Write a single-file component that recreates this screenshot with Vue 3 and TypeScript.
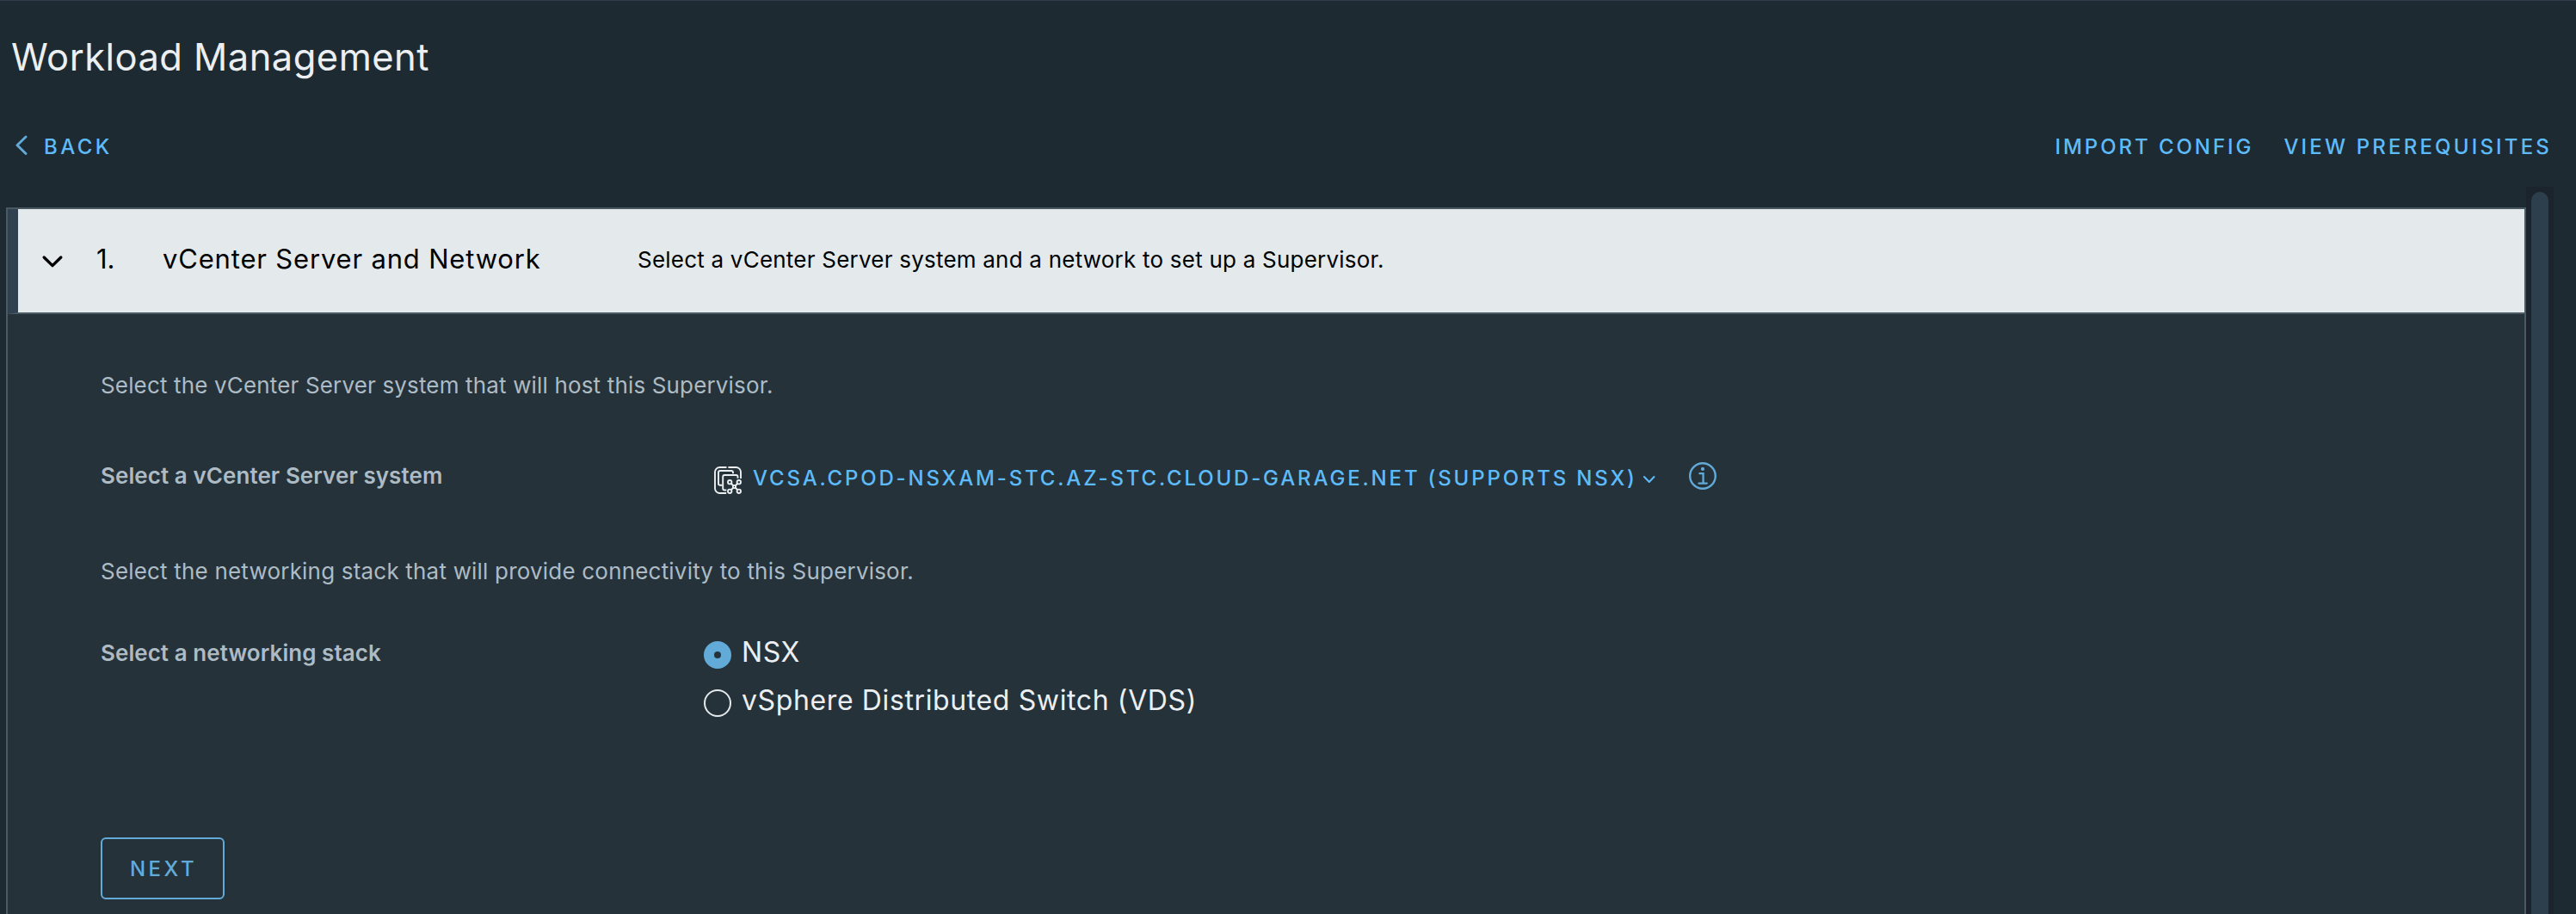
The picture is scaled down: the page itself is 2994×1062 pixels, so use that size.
<script setup lang="ts">
import { ref } from 'vue'

interface NetworkStack {
  id: string
  label: string
}

const stacks: NetworkStack[] = [
  { id: 'nsx', label: 'NSX' },
  { id: 'vds', label: 'vSphere Distributed Switch (VDS)' },
]
const selectedStack = ref('nsx')
const vcenter = 'vcsa.cpod-nsxam-stc.az-stc.cloud-garage.net (supports NSX)'
</script>

<template>
  <div class="page">
    <h1 class="title">Workload Management</h1>

    <nav class="toolbar">
      <a class="link back">
        <svg class="back-icon" width="16" height="24" viewBox="0 0 16 24">
          <path d="M13 2 3 11.800 13 21.500" fill="none" stroke="#62abd8" stroke-width="2.900" stroke-linecap="round" stroke-linejoin="round" />
        </svg>
        <span class="back-text">Back</span>
      </a>
      <div class="actions">
        <a class="link import">Import Config</a>
        <a class="link prereq">View Prerequisites</a>
      </div>
    </nav>

    <div class="scroller">
      <section class="panel">
        <header class="step-header">
          <svg class="step-caret" width="26" height="18" viewBox="0 0 26 18">
            <path d="M3.200 3 13 12.600 22.800 3" fill="none" stroke="#000" stroke-width="3.400" stroke-linecap="round" stroke-linejoin="round" />
          </svg>
          <span class="step-number">1.</span>
          <span class="step-title">vCenter Server and Network</span>
          <span class="step-desc">Select a vCenter Server system and a network to set up a Supervisor.</span>
        </header>

        <div class="step-body">
          <p class="intro host">Select the vCenter Server system that will host this Supervisor.</p>

          <div class="row system-row">
            <label class="label system-label">Select a vCenter Server system</label>
            <div class="system">
              <svg class="vc-icon" width="32" height="32" viewBox="0 0 32 32" fill="none" stroke="#eceff1" stroke-width="1.900">
                <path d="M14.200 31H6.500a5.500 5.500 0 0 1-5.500-5.500V6.500A5.500 5.500 0 0 1 6.500 1h8" />
                <path d="M16.400 1h9.100A5.500 5.500 0 0 1 31 6.500V14" />
                <path d="M22 8.300V7a2 2 0 0 0-2-2H7a2 2 0 0 0-2 2v12.700a2 2 0 0 0 2 2h2.500" />
                <path d="M27.500 13.800V12a2 2 0 0 0-2-2H12.200a2 2 0 0 0-2 2v13.500a2 2 0 0 0 2 2h2.100" />
                <path d="m19.500 19.500 8 8m0-8-8 8" />
                <g fill="#25333b">
                  <circle cx="18.200" cy="18.200" r="2.200" />
                  <circle cx="28.800" cy="18.200" r="2.200" />
                  <circle cx="18.200" cy="28.800" r="2.200" />
                  <circle cx="28.800" cy="28.800" r="2.200" />
                  <circle cx="23.500" cy="23.500" r="1.600" />
                </g>
              </svg>
              <a class="link vcenter">{{ vcenter }}</a>
              <svg class="drop-caret" width="16" height="12" viewBox="0 0 16 12">
                <path d="M2 3 7.800 8.900 13.500 3" fill="none" stroke="#5ebbfa" stroke-width="2.100" stroke-linecap="round" stroke-linejoin="round" />
              </svg>
              <svg class="info" width="32" height="32" viewBox="0 0 32 32" fill="none" stroke="#62abd8">
                <circle cx="16" cy="16" r="14.800" stroke-width="2.400" />
                <circle cx="16" cy="7.900" r="2.100" fill="#62abd8" stroke="none" />
                <path d="M12.400 13.200h4.200v11.200M11.500 24.600h9.300" stroke-width="2.300" stroke-linecap="round" />
              </svg>
            </div>
          </div>

          <p class="intro stack">Select the networking stack that will provide connectivity to this Supervisor.</p>

          <div class="row stack-row">
            <label class="label stack-label">Select a networking stack</label>
            <div class="radios">
              <div
                v-for="s in stacks"
                :key="s.id"
                class="radio"
                :class="[s.id, { checked: s.id === selectedStack }]"
                @click="selectedStack = s.id"
              >
                <span class="dot"></span>
                <span class="radio-text">{{ s.label }}</span>
              </div>
            </div>
          </div>

          <button class="next">Next</button>
        </div>
      </section>
      <div class="track"><div class="thumb"></div></div>
    </div>
  </div>
</template>

<style>
body {
  background: #1e2a32;
  overflow: hidden;
}
</style>

<style scoped>
.page {
  box-sizing: border-box;
  height: 1062px;
  display: flex;
  flex-direction: column;
  overflow: hidden;
  border-top: 1px solid #2f3e4a;
  background: #1e2a32;
  color: #eceff1;
  font-family: Inter, "Liberation Sans", sans-serif;
}
.title {
  margin: 33px 0 0 13px;
  font-size: 43.500px;
  line-height: 64px;
  font-weight: 400;
  letter-spacing: 0.450px;
}
.toolbar {
  display: flex;
  justify-content: space-between;
  margin: 56px 28px 0 17px;
  height: 32px;
}
.link {
  color: #5ebbfa;
  font-size: 24px;
  line-height: 32px;
  font-weight: 500;
  text-transform: uppercase;
  white-space: nowrap;
}
.back {
  display: flex;
  letter-spacing: 3.400px;
}
.back-icon {
  margin: 3px 18px 0 0;
}
.back-text,
.actions {
  padding-top: 1px;
}
.actions {
  display: flex;
  gap: 35px;
}
.import {
  letter-spacing: 2.940px;
}
.prereq {
  letter-spacing: 3.180px;
}
.scroller {
  display: flex;
  flex: 1;
  margin: 31px 26px 0 7px;
}
.panel {
  flex: 1;
  display: flex;
  flex-direction: column;
  margin-top: 24px;
  border: 2px solid #4b5964;
  border-bottom: 0;
}
.step-header {
  box-sizing: border-box;
  height: 122px;
  display: flex;
  align-items: center;
  padding-left: 27px;
  border-left: 12px solid #304250;
  border-bottom: 2px solid #4b5964;
  background: #e4e9eb;
  color: #000;
  white-space: nowrap;
}
.step-caret {
  margin-top: 3px;
}
.step-number {
  width: 77px;
  margin-left: 38px;
  font-size: 31px;
  line-height: 40px;
  padding-bottom: 4px;
}
.step-title {
  width: 552px;
  font-size: 31px;
  line-height: 40px;
  padding-bottom: 4px;
  letter-spacing: 0.820px;
}
.step-desc {
  font-size: 26px;
  line-height: 36px;
  padding-bottom: 3px;
  letter-spacing: 0.220px;
}
.step-body {
  flex: 1;
  padding: 65px 0 0 108px;
  background: #25323a;
}
.intro {
  margin: 0;
  font-size: 26px;
  line-height: 36px;
  color: #adbbc4;
}
.host {
  letter-spacing: 0.157px;
}
.stack {
  margin-top: 72px;
  letter-spacing: 0.195px;
}
.row {
  display: flex;
}
.label {
  font-size: 26px;
  line-height: 36px;
  font-weight: 600;
  color: #adbbc4;
}
.system-row {
  height: 40px;
  margin-top: 68px;
}
.system-label {
  width: 713px;
  padding-top: 1px;
  letter-spacing: 0.070px;
}
.system {
  display: flex;
}
.vc-icon {
  margin-top: 8px;
}
.vcenter {
  margin: 6px 0 0 13px;
  letter-spacing: 2.830px;
}
.drop-caret {
  margin: 17px 0 0 6px;
}
.info {
  margin: 3px 0 0 38px;
}
.stack-row {
  height: 112px;
  margin-top: 57px;
}
.stack-label {
  width: 701px;
  padding-top: 2px;
  letter-spacing: 0.053px;
}
.radios {
  display: flex;
  flex-direction: column;
}
.radio {
  display: flex;
  height: 58px;
}
.dot {
  box-sizing: border-box;
  width: 32px;
  height: 32px;
  margin: 6px 12px 0 0;
  border: 2px solid #e4e9eb;
  border-radius: 50%;
}
.checked .dot {
  border: 12px solid #62abd8;
}
.radio-text {
  margin-top: -1px;
  font-size: 32px;
  line-height: 40px;
  letter-spacing: 0.620px;
}
.next {
  display: block;
  box-sizing: border-box;
  width: 144px;
  height: 72px;
  margin: 122px 0 0;
  padding: 1px 0 0 2px;
  border: 2px solid #62abd8;
  border-radius: 6px;
  background: transparent;
  color: #62abd8;
  font: 500 24px/32px Inter, "Liberation Sans", sans-serif;
  letter-spacing: 3.500px;
  text-transform: uppercase;
}
.track {
  width: 32px;
  box-sizing: border-box;
  padding: 6px 6px 0;
  display: flex;
  background: #1b242c;
}
.thumb {
  flex: 1;
  border-radius: 10px 10px 0 0;
  background: #2d3f4d;
}
</style>
